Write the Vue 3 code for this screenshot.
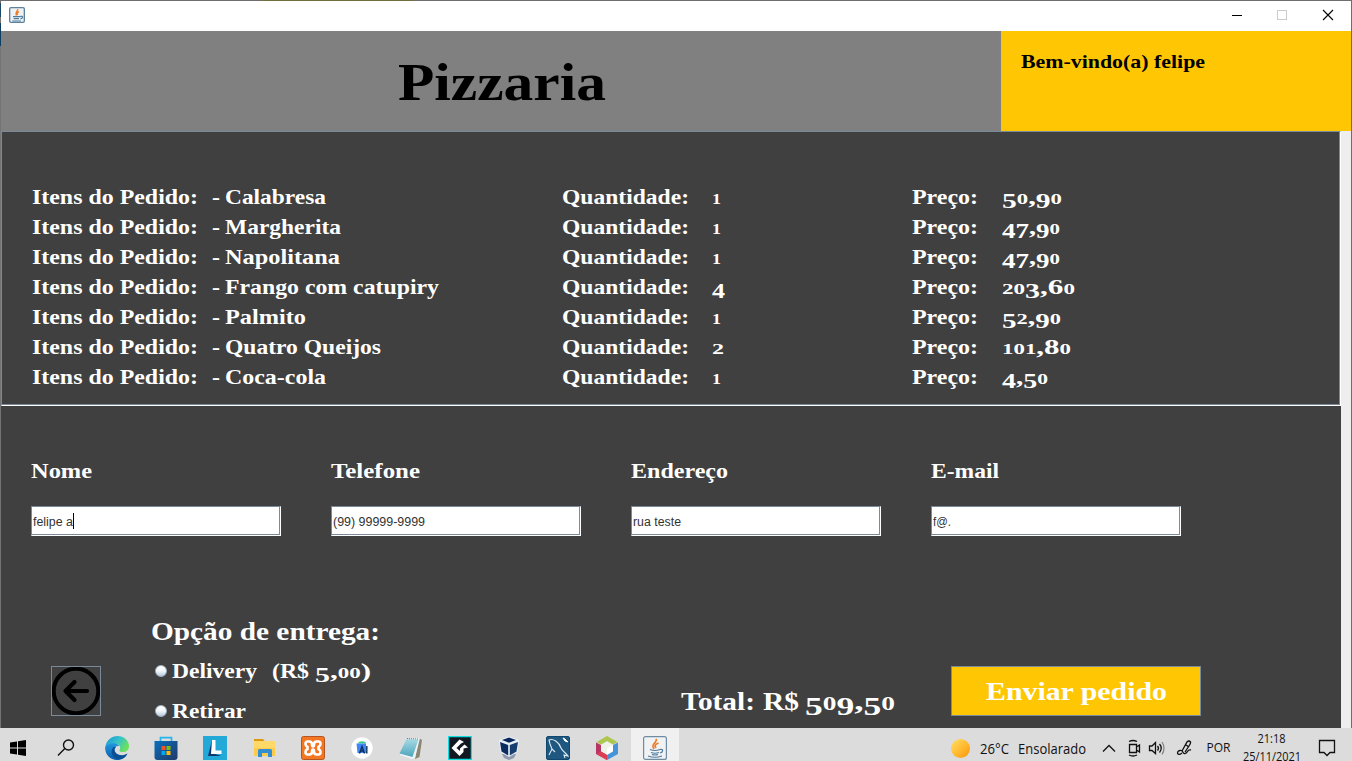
<script setup>
import { h } from 'vue'

// Old-style figures: 0, 1, 2 sit at x-height, 3, 4, 5, 7, 9 hang below the baseline.
function figures(text, size) {
  let shift = 0
  return [...text].map((ch) => {
    const small = '012'.includes(ch)
    const low = '34579'.includes(ch)
    const target = low ? size * 0.2 : 0
    const dy = target - shift
    shift = target
    return h('tspan', { dy: dy.toFixed(2), 'font-size': small ? size * 0.74 : low ? size * 0.96 : size }, ch)
  })
}

// One line of text; each part is [x, width, text].
const Line = (props) => {
  const size = Number(props.size)
  return h(
    'svg',
    { width: props.w, height: props.h, 'font-size': size, fill: 'currentColor', overflow: 'visible' },
    props.parts.map(([x, width, text]) =>
      h('text', { x, y: props.base, textLength: width, lengthAdjust: 'spacingAndGlyphs' },
        props.old && /\d/.test(text) ? figures(text, size) : text)
    )
  )
}
Line.props = { size: String, w: String, h: String, base: String, parts: Array, old: Boolean }

const items = [
  ['Calabresa', 101, '1', 9, '50,90', 60],
  ['Margherita', 116, '1', 9, '47,90', 58],
  ['Napolitana', 115, '1', 9, '47,90', 58],
  ['Frango com catupiry', 214, '4', 13, '203,60', 73],
  ['Palmito', 81, '1', 9, '52,90', 59],
  ['Quatro Queijos', 156, '2', 12, '101,80', 69],
  ['Coca-cola', 101, '1', 9, '4,50', 46]
]
const fields = [
  ['Nome', 61, 'felipe a', 40],
  ['Telefone', 89, '(99) 99999-9999', 92],
  ['Endereço', 97, 'rua teste', 48],
  ['E-mail', 68, 'f@.', 18]
]
</script>

<template>
  <div class="screen">
    <div class="window">
      <div class="titlebar">
        <svg class="java" width="16" height="16" viewBox="0 0 24 24">
          <rect x="1" y="1" width="22" height="22" rx="2" fill="#eef2f4" stroke="#5f8299" stroke-width="2" />
          <path d="M13 3C14 7 8 7 11 13M15 7C11 9 12 10 13 12" fill="none" stroke="#ef7a20" stroke-width="2" />
          <path d="M6 14.5h11M7 17.5h8M5 21h13M17 14c5-1 4 3 0 4" fill="none" stroke="#4f7c9d" stroke-width="1.7" />
        </svg>
        <svg class="controls" width="130" height="30" shape-rendering="crispEdges">
          <path d="M11 14.5h10" stroke="#000" />
          <rect x="56.500" y="9.500" width="9" height="9" fill="none" stroke="#ccc" />
          <path d="M102 9l10 10M112 9l-10 10" stroke="#000" shape-rendering="auto" stroke-width="1.100" />
        </svg>
      </div>

      <header class="header">
        <div class="brand"><Line size="53" w="210" h="100" base="68.5" :parts="[[0, 208, 'Pizzaria']]" /></div>
        <div class="welcome"><Line size="19.500" w="190" h="100" base="37" :parts="[[0, 184, 'Bem-vindo(a) felipe']]" /></div>
      </header>

      <main class="body">
        <section class="order">
          <div v-for="(it, i) in items" :key="i" class="row">
            <Line size="21" w="530" h="30" base="22" :parts="[[0, 166, 'Itens do Pedido:'], [180, 8, '-'], [193, it[1], it[0]]]" />
            <Line size="21" w="350" h="30" base="22" old :parts="[[0, 127, 'Quantidade:'], [150, it[3], it[2]]]" />
            <Line size="21" w="160" h="30" base="22" old :parts="[[0, 66, 'Preço:'], [90, it[5], it[4]]]" />
          </div>
        </section>

        <section class="form">
          <div v-for="(f, i) in fields" :key="f[0]" class="field">
            <Line size="21" w="250" h="50" base="22" :parts="[[0, f[1], f[0]]]" />
            <div class="input">
              <Line size="12" w="200" h="28" base="19" :parts="[[1, f[3], f[2]]]" />
              <span v-if="i === 0" class="caret"></span>
            </div>
          </div>
        </section>

        <section class="bottom">
          <button class="back" aria-label="Voltar">
            <svg width="48" height="48" viewBox="0 0 48 48" fill="none" stroke="#000">
              <circle cx="24" cy="24" r="22.300" stroke-width="4" />
              <path d="M35 24H13.500M22.500 15L13.500 24l9 9" stroke-width="4.200" stroke-linecap="round" stroke-linejoin="round" />
            </svg>
          </button>
          <div class="delivery">
            <Line size="26" w="240" h="40" base="26" :parts="[[0, 229, 'Opção de entrega:']]" />
            <div class="option">
              <i class="radio"></i>
              <Line size="21" w="210" h="40" base="24" old :parts="[[0, 85, 'Delivery'], [100, 37, '(R$'], [143, 56, '5,00)']]" />
            </div>
            <div class="option">
              <i class="radio"></i>
              <Line size="21" w="210" h="36" base="24" :parts="[[0, 74, 'Retirar']]" />
            </div>
          </div>
          <div class="total"><Line size="26" w="220" h="50" base="44" old :parts="[[0, 74, 'Total:'], [82, 36, 'R$'], [124, 90, '509,50']]" /></div>
          <button class="send"><Line size="26" w="182" h="48" base="33" :parts="[[0, 181, 'Enviar pedido']]" /></button>
        </section>
      </main>
    </div>

    <footer class="taskbar">
      <div class="cell start">
        <svg width="16" height="16"><path d="M0 2.500L7 1.500V7.500H0ZM8 1.300L16 0V7.500H8ZM0 8.500H7V14.500L0 13.500ZM8 8.500H16V16L8 14.700Z" /></svg>
      </div>
      <div class="cell search">
        <svg width="18" height="18" fill="none" stroke="#111" stroke-width="1.400"><circle cx="11.500" cy="6" r="5" /><path d="M7.800 9.600L1 16.500" /></svg>
      </div>
      <div class="cell">
        <svg width="24" height="24" viewBox="0 0 24 24">
          <defs>
            <linearGradient id="eg" x1="0" y1="0" x2="1" y2=".5"><stop offset="0" stop-color="#1593d8" /><stop offset=".55" stop-color="#35c1c9" /><stop offset="1" stop-color="#6be05d" /></linearGradient>
            <linearGradient id="eb" x1="0" y1="0" x2="0" y2="1"><stop offset="0" stop-color="#2296df" /><stop offset="1" stop-color="#0a5ba8" /></linearGradient>
          </defs>
          <path d="M.3 11C1.500 4 6.500 0 12.500 0C19 0 24 4.500 24 10.500C24 14 21 16 18 16C14 16 14 14.500 15 13C16 10 13 8 10 8C5 7.500 2 9 .3 11Z" fill="url(#eg)" />
          <path d="M.2 11C3 6.500 12 6 14 10C10 9.500 8.500 13 10 16C12 20 18 21 22.500 17.500C20 22 16 24 12 24C5 24-.5 18 .2 11Z" fill="url(#eb)" />
          <path d="M8.500 11C4 16 8 23 14 23.500C18 23.400 20.700 21 22.500 17.500C18 20.500 13 19.500 10.500 16.500C9 14.500 9.300 12.500 11 11Z" fill="#084f96" />
        </svg>
      </div>
      <div class="cell">
        <svg width="24" height="24" viewBox="0 0 24 24">
          <defs><linearGradient id="st" x1="0" y1="0" x2="1" y2="1"><stop offset="0" stop-color="#0870bd" /><stop offset="1" stop-color="#233868" /></linearGradient></defs>
          <path d="M6.500 6V1.700H17.500V6" fill="none" stroke="#27b6ec" stroke-width="1.700" />
          <path d="M.5 5H23.500V21Q23.500 24 20.500 24H3.500Q.5 24 .5 21Z" fill="url(#st)" />
          <path d="M7.500 10h4v4h-4z" fill="#f35325" /><path d="M12.500 10h4v4h-4z" fill="#81bc06" /><path d="M7.500 15h4v4h-4z" fill="#05a6f0" /><path d="M12.500 15h4v4h-4z" fill="#ffba08" />
        </svg>
      </div>
      <div class="cell">
        <svg width="24" height="24"><rect width="24" height="24" fill="#22a9d8" /><path d="M9 4L5 20H18L9 17Z" fill="#10376a" /><path d="M9 4H12.500V14.500H18.500V18H8Z" fill="#fff" /></svg>
      </div>
      <div class="cell">
        <svg width="24" height="24"><path d="M2 3h9l2 2.500H2z" fill="#d99a10" /><rect x="2" y="5" width="21" height="15" fill="#ffd968" /><path d="M2 12H23V20H2Z" fill="#fccb4b" /><path d="M6 21V14.500Q6 13 7.500 13H18.500Q20 13 20 14.500V21H16V17H10V21Z" fill="#318fd4" /></svg>
      </div>
      <div class="cell">
        <svg width="24" height="24"><rect x=".5" y=".5" width="23" height="23" rx="2" fill="#f37623" stroke="#b65521" /><path d="M8.500 5.500H6.500Q4.500 5.500 4.500 8Q4.500 10 6.500 11V13Q4.500 14 4.500 16Q4.500 18.500 6.500 18.500H8.500Q11 18.500 11 15.500Q11 13.500 12 13.500Q13 13.500 13 15.500Q13 18.500 15.500 18.500H17.500Q19.500 18.500 19.500 16Q19.500 14 17.500 13V11Q19.500 10 19.500 8Q19.500 5.500 17.500 5.500H15.500Q13 5.500 13 8.500Q13 10.500 12 10.500Q11 10.500 11 8.500Q11 5.500 8.500 5.500Z" fill="none" stroke="#fff" stroke-width="2.600" /></svg>
      </div>
      <div class="cell">
        <svg width="24" height="24"><circle cx="12" cy="12" r="10.700" fill="#fff" /><path d="M8 7.500C8 4.500 16 4.500 16 7.500Z" fill="#39ce83" /><path d="M6.500 7.500H16V17H7.500Z" fill="#4285f4" /><path d="M9.500 17.500L12 10.500L14.500 17.500M10.500 15H13.500M16.800 10V17.500" fill="none" stroke="#0a315c" stroke-width="1.400" /></svg>
      </div>
      <div class="cell">
        <svg width="24" height="24">
          <defs><linearGradient id="np" x1="0" y1="0" x2="0" y2="1"><stop offset="0" stop-color="#a6d9e4" /><stop offset="1" stop-color="#4da5bc" /></linearGradient></defs>
          <path d="M20 2L23 4L20.500 21L16 23Z" fill="#8c8775" /><path d="M8 3L21 2L16 22L13 23L1 19Z" fill="#eef4f4" /><path d="M7.500 3L19.500 3.500L13.500 21L.5 17.500Z" fill="url(#np)" /><path d="M8 2.500L19 3" stroke="#777" stroke-dasharray="1 1" />
        </svg>
      </div>
      <div class="cell">
        <svg width="24" height="24"><rect x=".6" y=".6" width="22.800" height="22.800" fill="#111821" stroke="#10dddf" stroke-width="1.300" /><path d="M16 6L11.500 3.500L3.500 12L11.500 20L15.500 16V12.500L20 11.500L16.500 8.500L12 12.500V15L8.500 12L13 7.500Z" fill="#fff" /></svg>
      </div>
      <div class="cell">
        <svg width="24" height="24"><path d="M5 18L7 22L12 24L17 22L19 18Z" fill="#8e9aad" /><path d="M2 4L12 .2L22 4L20.500 16L12 21L3.500 16Z" fill="#e8f0f6" /><path d="M5 4L12 1.500L19 4L12 6.800Z" fill="#08275b" /><path d="M3 6L11.200 9V19.500L4.500 15.500Z" fill="#0b2c5f" /><path d="M21 6L12.800 9V19.500L19.500 15.500Z" fill="#173e70" /></svg>
      </div>
      <div class="cell">
        <svg width="24" height="24"><rect x=".5" y=".5" width="23" height="23" rx="1.500" fill="#1e577f" stroke="#12476d" /><path d="M3 19L6 13L4 8L3 4C7 2 13 6 15 12C16 15 20 17 22 20L18 19L19 22M6 13L9 16" fill="none" stroke="#dbe9f0" stroke-width="1.100" /><path d="M17 2L19 5L22 6L19 3Z" fill="#fff" stroke="#fff" /></svg>
      </div>
      <div class="cell">
        <svg width="24" height="24"><path d="M12 0L22.500 6L18 8.500L12 5L6 8.500L1.500 6Z" fill="#acc74b" /><path d="M1 6.500L6 9V15.500L12 19V24L1 18Z" fill="#b63765" /><path d="M12 19V24L1.500 18L6 15.500Z" fill="#df3d54" /><path d="M23 6.500L18 9V15.500L12 19V24L23 18Z" fill="#4593d8" /><path d="M12 5.500L18 9V15L12 18.500L6 15V9Z" fill="#edf3e7" /><path d="M12 12L18 9V15L12 18.500Z" fill="#fff" /></svg>
      </div>
      <div class="cell active">
        <svg width="24" height="24">
          <rect x=".6" y=".6" width="22.800" height="22.800" rx="2" fill="#f0f2f3" stroke="#6e8da2" stroke-width="1.200" />
          <path d="M13 3C15 7 7 7 11 13M15.500 7C11 9 11.500 10 13 12" fill="none" stroke="#f07a24" stroke-width="1.700" />
          <path d="M7 13.500Q12 15.500 17 13.500M8 16.500Q12 18 16 16.500M9 18.500Q12 19.500 15 18.500M5 20Q12 22.500 19 20M17 13.500c4-1 3 3 0 3.500" fill="none" stroke="#4f7c9d" stroke-width="1.200" />
        </svg>
      </div>

      <div class="tray">
        <i class="sun"></i>
        <Line class="weather" size="14" w="108" h="33" base="26" :parts="[[0, 29, '26°C'], [38, 68, 'Ensolarado']]" />
        <svg width="248" height="33" fill="none" stroke="#111" stroke-width="1.300">
          <path d="M15 23.500L21 17.500L27 23.500" />
          <path d="M41.500 16.500H48.500V24.500H41.500ZM48.500 19L51.500 17V24L48.500 22M41 13.500Q45 11.500 49 13.500M41 27Q45 29 49 27" />
          <path d="M61.500 18H64L67.500 14.500V25.500L64 22.500H61.500ZM69.500 18Q71.500 20 69.500 22.500M71.500 16Q75 20 71.500 24.500" />
          <path d="M74 14Q78 20 74 26.500" stroke="#888" />
          <path d="M94 25C89 29 88 23 92 22.500C96 22 94 26 97 25.500C100 25 99 21 103 22M94 23L99 14Q101 12 102.500 14Q103 15 101 18L97 24M98 17L101 19" />
          <text x="118.500" y="24" textLength="24" lengthAdjust="spacingAndGlyphs" font-size="12" fill="#111" stroke="none">POR</text>
          <text x="169.500" y="15" textLength="28" lengthAdjust="spacingAndGlyphs" font-size="12" fill="#111" stroke="none">21:18</text>
          <text x="155" y="32.500" textLength="58" lengthAdjust="spacingAndGlyphs" font-size="12" fill="#111" stroke="none">25/11/2021</text>
          <path d="M231.500 12.500H246.500V24.500H242L239 27.500L236 24.500H231.500Z" />
        </svg>
      </div>
    </footer>
  </div>
</template>

<style>
body { overflow: hidden; }
</style>

<style scoped>
* { box-sizing: border-box; }
svg { display: block; flex: none; }
.screen { width: 1352px; height: 761px; overflow: hidden; display: flex; flex-direction: column; font-family: "Liberation Serif", serif; font-weight: 700; }
.window {
  height: 728px; padding: 1px 1px 0;
  background:
    linear-gradient(90deg, transparent 262px, #70703f 262px, #70703f 413px, transparent 413px) 0 0 / 100% 1px no-repeat,
    linear-gradient(#6e6e6e 3px, #1d4767 3px, #1d4767 17px, #777 17px, #777 23px, #0d3d60 23px, #0d3d60 46px, #747474 46px) 0 0 / 1px 100% no-repeat,
    #6e6e6e;
}
.titlebar { height: 30px; background: #fff; display: flex; justify-content: space-between; padding-left: 8px; }
.java { margin-top: 6px; }
.header { height: 100px; display: flex; }
.brand { width: 1000px; background: #808080; padding-left: 397px; color: #000; }
.welcome { flex: 1; background: #ffc703; padding-left: 20px; color: #000; }
.body { height: 597px; border-right: 10px solid #eee; background: #404040; color: #fff; }
.order { height: 275px; padding: 50px 0 0 30px; border: 1px solid #7a8a99; border-right-color: #fff; border-bottom-color: #fff; box-shadow: inset -1px -1px #7a8a99; }
.row { display: flex; height: 30px; }
.form { display: flex; gap: 50px; height: 130px; padding: 50px 0 0 30px; }
.field { width: 250px; }
.input { height: 30px; background: #fff; border: 1px solid #7a8a99; border-right-color: #fff; border-bottom-color: #fff; box-shadow: inset -1px -1px #7a8a99; color: #333; font-family: "Liberation Sans", sans-serif; font-weight: 400; position: relative; }
.caret { position: absolute; left: 41px; top: 6px; width: 1px; height: 16px; background: #000; }
.bottom { height: 192px; display: flex; padding-left: 50px; }
button { padding: 0; font: inherit; color: inherit; }
.back { width: 50px; height: 50px; margin-top: 130px; background: #404040; border: 1px solid #7a8a99; }
.delivery { width: 480px; margin: 78px 0 0 50px; }
.option { display: flex; height: 40px; padding-left: 4px; }
.radio { width: 12px; height: 12px; margin: 11px 5px 0 0; border-radius: 50%; background: linear-gradient(#fff, #f2f6fa 50%, #b5cbe0); border: 1px solid #a7b4c2; }
.total { width: 270px; padding-top: 130px; margin-left: 50px; }
.send { width: 250px; height: 50px; margin-top: 130px; padding-left: 34px; background: #ffc703; border: 1px solid #7a8a99; }
.taskbar { height: 33px; flex: none; overflow: hidden; background: #dcdcdc; display: flex; color: #111; font-family: "Open Sans", sans-serif; font-weight: 400; }
.cell { width: 49px; height: 33px; flex: none; display: flex; justify-content: center; padding-top: 8px; }
.start { width: 36px; padding-top: 12px; }
.search { width: 56px; padding: 11px 0 0 3px; }
.active { background: #f0f0f0; width: 48px; }
.tray { margin-left: auto; margin-right: 16px; display: flex; }
.sun { width: 19px; height: 19px; margin: 11px 10px 0 0; border-radius: 50%; background: linear-gradient(135deg, #ffe066, #ffb52a 60%, #f59310); }
</style>
